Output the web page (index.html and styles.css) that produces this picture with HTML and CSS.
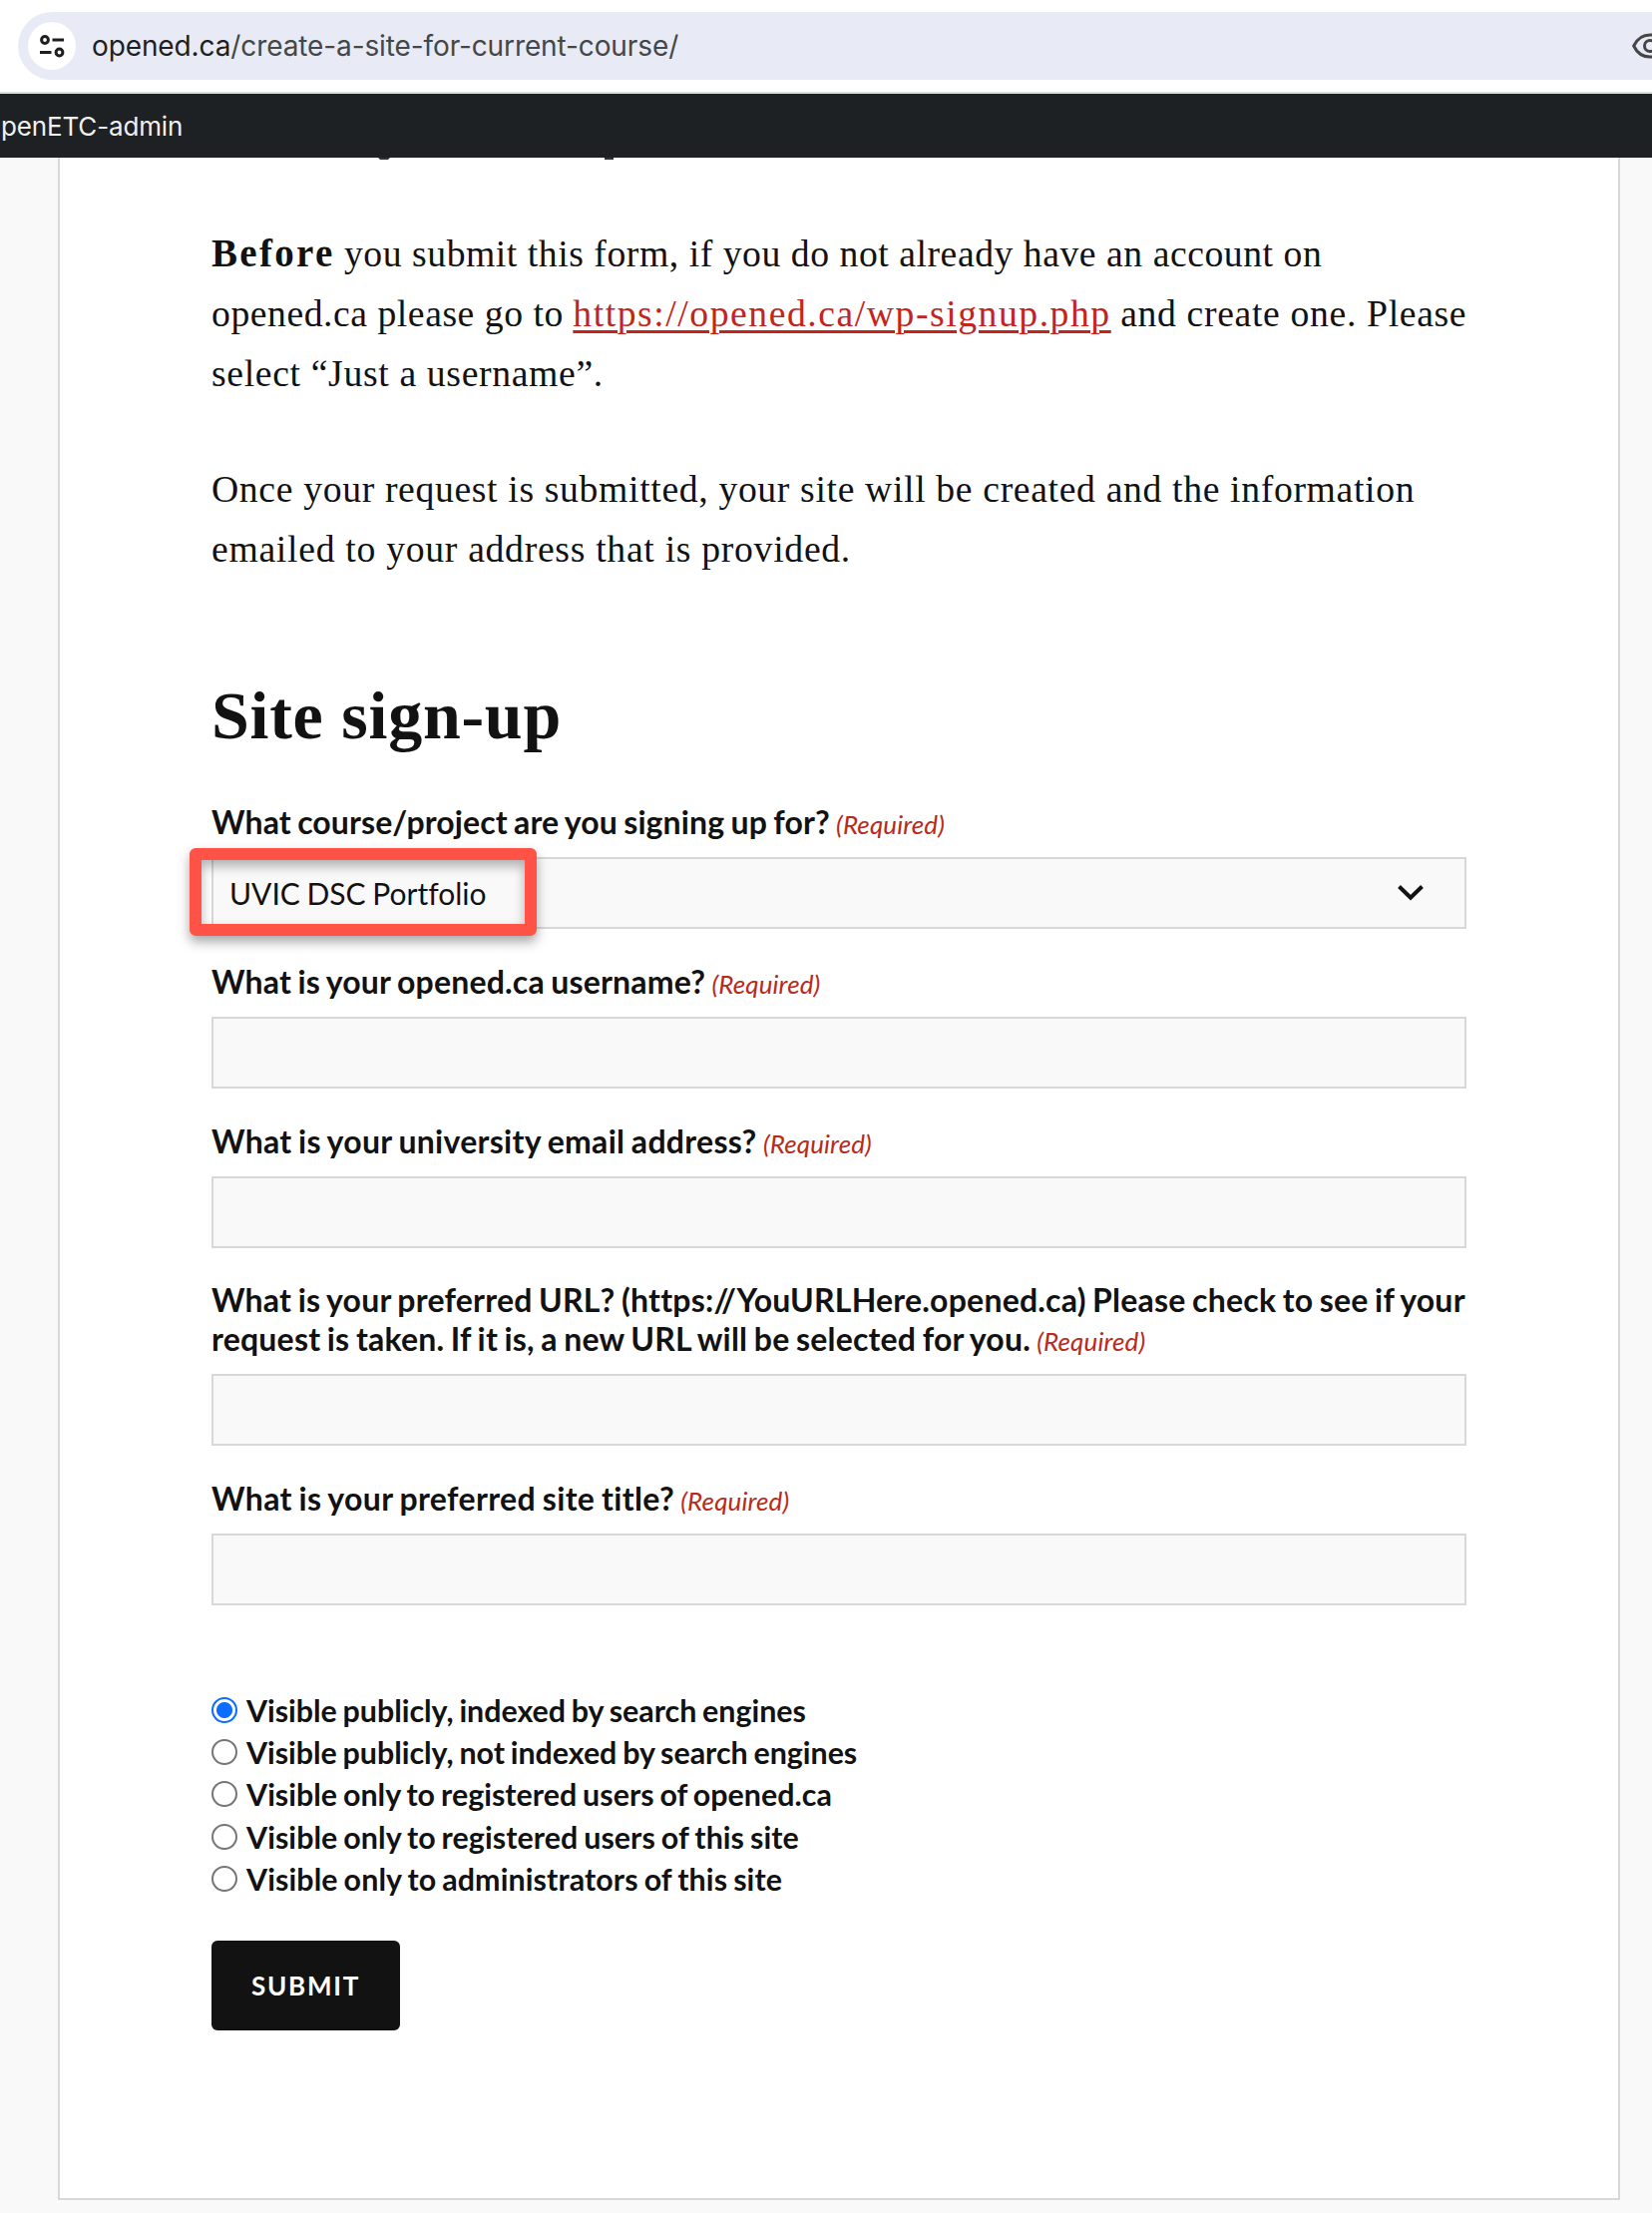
FILE: index.html
```
<!DOCTYPE html>
<html lang="en">
<head>
<meta charset="utf-8">
<title>Create a site for current course</title>
<link rel="stylesheet" href="styles.css">
</head>
<body>
<header class="toolbar">
  <div class="address">
    <span class="site-info">
      <svg width="28" height="28" viewBox="0 0 28 28" fill="none" stroke="#1f1f1f" stroke-width="3"><circle cx="7" cy="8" r="3.4"/><path d="M14.5 8H26M2 20.5h11.5"/><circle cx="21.5" cy="20.5" r="3.4"/></svg>
    </span>
    <span class="url"><span class="host">opened.ca</span><span class="path">/create-a-site-for-current-course/</span></span>
    <svg class="eye" width="36" height="26" viewBox="0 0 36 26" fill="none" stroke="#444746" stroke-width="3"><path d="M1.7 13C5 6 11 2 18 2s13 4 16.300 11C31 20 25 24 18 24S5 20 1.700 13z"/><circle cx="18" cy="13" r="5.500"/></svg>
  </div>
</header>
<nav class="admin-bar"><span class="admin-name">penETC-admin</span></nav>
<main class="card">
  <svg class="scrolled-line" width="1258" height="2" viewBox="0 0 1258 2" fill="#333"><path d="M167 0h12l-2 2h-8zM394 0h9v2h-9z"/></svg>
  <p class="intro"><span class="line"><strong>Before</strong> <span class="l1">you submit this form, if you do not already have an account on</span></span>
  <span class="line"><span class="l2">opened.ca please go to</span> <a class="link" href="#">https://opened.ca/wp-signup.php</a> <span class="l3">and create one. Please</span></span>
  <span class="line"><span class="l4">select “Just a username”.</span></span></p>
  <p class="intro"><span class="line"><span class="l5">Once your request is submitted, your site will be created and the information</span></span>
  <span class="line"><span class="l6">emailed to your address that is provided.</span></span></p>
  <h2 class="title">Site sign-up</h2>
  <form class="form">
    <div class="field">
      <label class="label"><span class="q1">What course/project are you signing up for?</span> <em>(Required)</em></label>
      <div class="input select"><span>UVIC DSC Portfolio</span>
        <svg width="28" height="18" viewBox="0 0 28 18" fill="none" stroke="#121212" stroke-width="4"><path d="M2.500 2.500L14 13.800 25.500 2.500"/></svg>
        <i class="highlight"></i>
      </div>
    </div>
    <div class="field"><label class="label"><span class="q2">What is your opened.ca username?</span> <em>(Required)</em></label><div class="input"></div></div>
    <div class="field"><label class="label"><span class="q3">What is your university email address?</span> <em>(Required)</em></label><div class="input"></div></div>
    <div class="field tall"><label class="label"><span class="q4">What is your preferred URL? (https://YouURLHere.opened.ca) Please check to see if your<br>request is taken. If it is, a new URL will be selected for you.</span> <em>(Required)</em></label><div class="input"></div></div>
    <div class="field"><label class="label"><span class="q5">What is your preferred site title?</span> <em>(Required)</em></label><div class="input"></div></div>
    <div class="choices">
      <label class="choice"><i class="radio on"></i><span>Visible publicly, indexed by search engines</span></label>
      <label class="choice"><i class="radio"></i><span>Visible publicly, not indexed by search engines</span></label>
      <label class="choice"><i class="radio"></i><span class="r3">Visible only to registered users of opened.ca</span></label>
      <label class="choice"><i class="radio"></i><span class="r4">Visible only to registered users of this site</span></label>
      <label class="choice"><i class="radio"></i><span class="r5">Visible only to administrators of this site</span></label>
    </div>
    <button class="submit" type="button">SUBMIT</button>
  </form>
</main>
</body>
</html>
```
FILE: styles.css
```
* { box-sizing: border-box; }
body { margin: 0; background: #f9f9f9; color: #121212; width: 1656px; height: 2218px; overflow: hidden; font-family: Lato, sans-serif; font-variant-ligatures: none; }
.toolbar { height: 94px; padding-top: 12px; background: #fff; border-bottom: 2px solid #dddfde; }
.address { display: flex; align-items: center; height: 68px; width: 1654px; margin-left: 18px; padding-left: 10px; background: #e8ebf5; border-radius: 34px 0 0 34px; }
.site-info { display: flex; align-items: center; justify-content: center; width: 48px; height: 48px; flex: none; border-radius: 50%; background: #fff; }
.url { margin-left: 16px; font: 28px/40px Inter, sans-serif; letter-spacing: -.11px; color: #444746; white-space: nowrap; }
.host { color: #1f1f1f; }
.eye { margin-left: auto; flex: none; }
.admin-bar { display: flex; align-items: center; height: 64px; padding: 2px 0 0 1px; background: #1d2124; color: #f0f0f1; font: 26px/62px Inter, sans-serif; letter-spacing: -.15px; }
.card { width: 1566px; height: 2047px; margin-left: 58px; padding: 0 152px; background: #fff; border: 2px solid #d8d8d8; border-top: 0; }
.scrolled-line { display: block; margin-bottom: 64px; }
.intro { margin: 0 0 55px; font: 37.700px/60.200px "Liberation Serif", serif; }
.intro strong { font-size: 39px; line-height: 1; letter-spacing: 2.300px; }
.line { display: block; white-space: nowrap; }
.l1, .l2 { letter-spacing: .535px; }
.l3 { letter-spacing: .650px; }
.l4, .l5 { letter-spacing: .645px; }
.l6 { letter-spacing: .700px; }
.link { color: #c3251d; letter-spacing: 1.530px; text-decoration-thickness: 3px; text-underline-offset: 4px; }
.title { margin: 97px 0 46px; font: bold 68px/80px "Liberation Serif", serif; letter-spacing: .750px; }
.field { margin-bottom: 32px; }
.label { display: block; padding-top: 1px; font-size: 32px; line-height: 39px; font-weight: 700; margin-bottom: 16px; white-space: nowrap; word-spacing: -1.500px; }
.label em { font-size: 26px; line-height: 1; font-weight: 400; letter-spacing: .11px; color: #b92a19; }
.q1 { letter-spacing: .1px; }
.q2 { letter-spacing: .18px; }
.q3 { letter-spacing: .29px; }
.q4 { letter-spacing: .21px; }
.q5 { letter-spacing: .37px; }
.tall .label { margin-top: -1px; }
.input { height: 72px; background: #f9f9f9; border: 2px solid #d8d8d8; }
.select { position: relative; display: flex; align-items: center; justify-content: space-between; padding: 0 40px 0 16px; font-size: 30px; word-spacing: -1px; }
.highlight { position: absolute; left: -24px; top: -11px; width: 348px; height: 88px; border: 12px solid #ff5347; border-radius: 6px; box-shadow: 0 6px 12px rgba(0,0,0,.35), inset 0 6px 12px rgba(0,0,0,.3); }
.choices { padding-top: 52px; }
.choice { display: flex; align-items: center; gap: 9px; height: 42.200px; font-size: 30.400px; font-weight: 700; word-spacing: -1.500px; letter-spacing: -.025px; }
.r3 { letter-spacing: .02px; }
.r4 { letter-spacing: .06px; }
.r5 { letter-spacing: .1px; }
.radio { width: 26px; height: 26px; border: 2px solid #767676; border-radius: 50%; background: #fff; }
.radio.on { border-color: #0b6cff; background: radial-gradient(circle, #0b6cff 7.500px, #fff 8.500px); }
.submit { display: block; width: 189px; height: 90px; margin-top: 41px; padding: 0; border: 0; border-radius: 6px; background: #121212; color: #fff; font: bold 26px/90px Lato, sans-serif; letter-spacing: 1.737px; }
```
